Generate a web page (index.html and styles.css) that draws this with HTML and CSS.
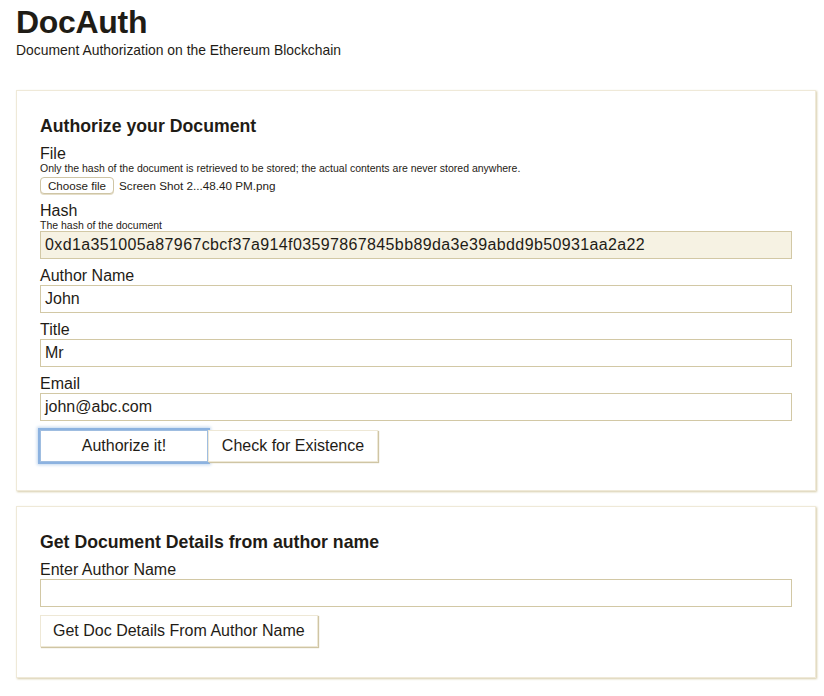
FILE: index.html
```html
<!DOCTYPE html>
<html>
<head>
<meta charset="utf-8">
<title>DocAuth</title>
<link rel="stylesheet" href="styles.css">
</head>
<body>
<header class="header">
  <h1 class="title">DocAuth</h1>
  <p class="subtitle">Document Authorization on the Ethereum Blockchain</p>
</header>

<section class="card card-main">
  <h2 class="card-title">Authorize your Document</h2>
  <div class="field">
    <div class="label">File</div>
    <div class="help">Only the hash of the document is retrieved to be stored; the actual contents are never stored anywhere.</div>
    <div class="file-row">
      <span class="file-btn">Choose file</span>
      <span class="file-name">Screen Shot 2...48.40 PM.png</span>
    </div>
  </div>
  <div class="field">
    <div class="label">Hash</div>
    <div class="help">The hash of the document</div>
    <div class="input input-readonly">0xd1a351005a87967cbcf37a914f03597867845bb89da3e39abdd9b50931aa2a22</div>
  </div>
  <div class="field">
    <div class="label">Author Name</div>
    <div class="input">John</div>
  </div>
  <div class="field">
    <div class="label">Title</div>
    <div class="input">Mr</div>
  </div>
  <div class="field">
    <div class="label">Email</div>
    <div class="input">john@abc.com</div>
  </div>
  <div class="actions actions-main">
    <button class="btn btn-focus btn-wide">Authorize it!</button>
    <button class="btn btn-wide2">Check for Existence</button>
  </div>
</section>

<section class="card">
  <h2 class="card-title">Get Document Details from author name</h2>
  <div class="field">
    <div class="label">Enter Author Name</div>
    <div class="input"></div>
  </div>
  <div class="actions">
    <button class="btn">Get Doc Details From Author Name</button>
  </div>
</section>
</body>
</html>
```

FILE: styles.css
```css
* { box-sizing: border-box; }

body {
  margin: 0;
  padding: 4px 8px 0 16px;
  background: #ffffff;
  color: #1f1c16;
  font-family: "Liberation Sans", Arial, sans-serif;
}

.header {
  margin-bottom: 32px;
}

.title {
  margin: 0;
  font-size: 32px;
  line-height: 37px;
  font-weight: 700;
  letter-spacing: -0.3px;
}

.subtitle {
  margin: 2px 0 0 0;
  font-size: 13.9px;
  line-height: 15px;
}

.card {
  width: 800px;
  border: 1px solid #efe9d8;
  box-shadow: 1px 1px 2px #d6cca9;
  padding: 23px 23px 30px 23px;
  margin-bottom: 15px;
}

.card-main {
  padding-bottom: 28px;
}

.card-title {
  margin: 0 0 7px 0;
  font-size: 17.7px;
  line-height: 24px;
  font-weight: 700;
}

.field {
  margin-bottom: 8px;
}

.label {
  font-size: 16px;
  line-height: 18px;
}

.help {
  font-size: 10.5px;
  line-height: 11px;
}

.file-row {
  display: flex;
  align-items: center;
  gap: 5px;
  height: 18px;
  margin-top: 2px;
}

.file-btn {
  display: inline-block;
  height: 17px;
  line-height: 15px;
  padding: 0 7px;
  font-size: 11.6px;
  border: 1px solid #cfc5a6;
  border-radius: 4px;
  background: #fff;
  box-shadow: 0 1px 0 #e5dec8;
}

.file-name {
  font-size: 11.7px;
}

.input {
  height: 28px;
  border: 1px solid #d2c8a5;
  padding: 0 4px;
  font-size: 16px;
  line-height: 26px;
  background: #fff;
  white-space: nowrap;
  overflow: hidden;
}

.input-readonly {
  background: #f6f2e3;
  letter-spacing: 0.37px;
}

.actions {
  display: flex;
}

.actions-main {
  margin-top: 9px;
}

.btn {
  height: 32px;
  padding: 0 12px;
  font-family: "Liberation Sans", Arial, sans-serif;
  font-size: 16px;
  color: #1f1c16;
  background: #fff;
  border: 1px solid #eee8d6;
  box-shadow: 1px 1px 1px #cfc5a4;
}

.btn-wide { width: 168px; }
.btn-wide2 { width: 170px; }

.btn-focus {
  border: 1px solid #9fbde0;
  box-shadow: 0 0 0 2px #8cb2e0, 0 0 3px 3px #c3d7ee;
}
```
